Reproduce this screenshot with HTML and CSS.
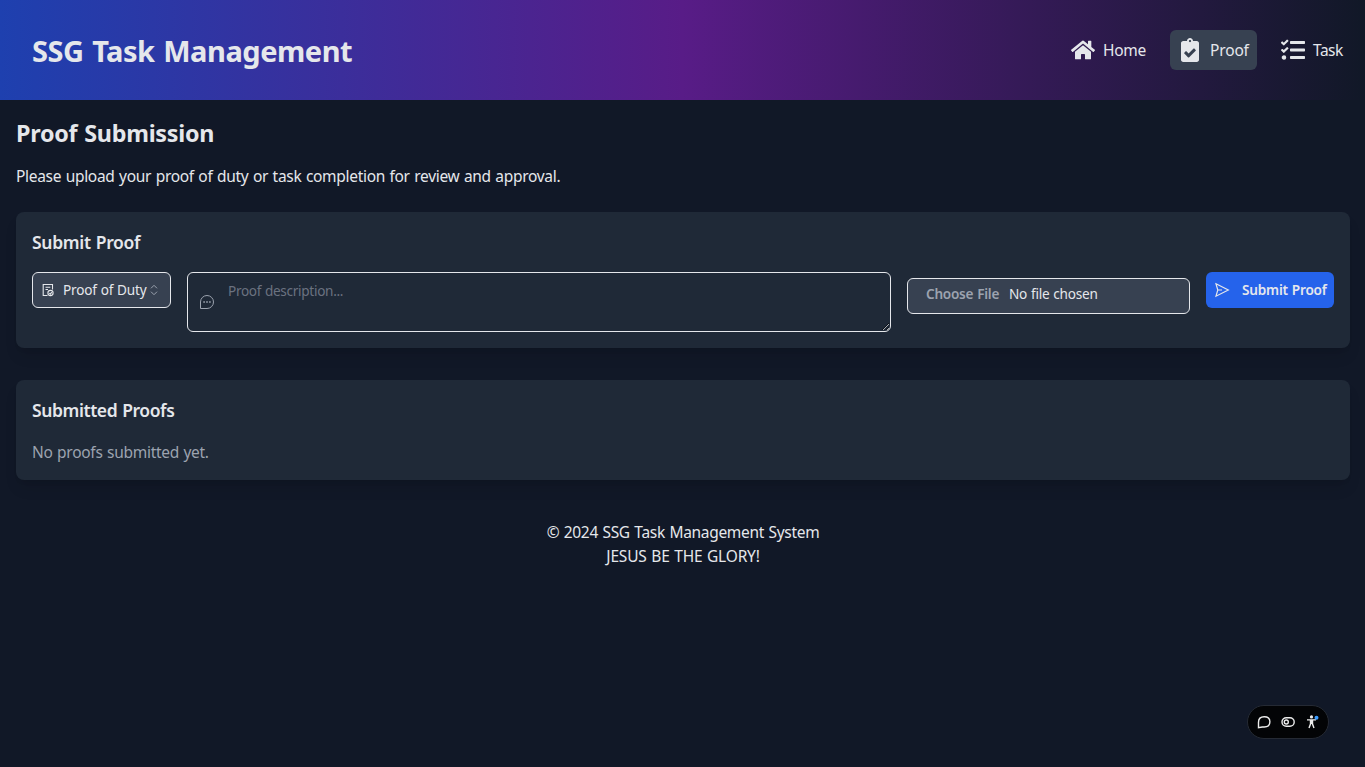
FILE: index.html
```html
<!DOCTYPE html>
<html lang="en">
<head>
<meta charset="utf-8">
<title>SSG Task Management</title>
<link rel="stylesheet" href="styles.css">
</head>
<body>
<header class="header">
  <h1 class="brand">SSG Task Management</h1>
  <nav class="nav">
    <a class="nav-link nav-home"><svg class="nav-icon" viewBox="0 0 576 512"><path d="M280.37 148.26L96 300.11V464a16 16 0 0 0 16 16l112.06-.29a16 16 0 0 0 15.92-16V368a16 16 0 0 1 16-16h64a16 16 0 0 1 16 16v95.64a16 16 0 0 0 16 16.05L464 480a16 16 0 0 0 16-16V300L295.67 148.26a12.19 12.19 0 0 0-15.3 0zM571.6 251.47L488 182.56V44.05a12 12 0 0 0-12-12h-56a12 12 0 0 0-12 12v72.61L318.47 43a48 48 0 0 0-61 0L4.34 251.47a12 12 0 0 0-1.6 16.9l25.5 31A12 12 0 0 0 45.15 301l235.22-193.74a12.19 12.19 0 0 1 15.3 0L530.9 301a12 12 0 0 0 16.9-1.6l25.5-31a12 12 0 0 0-1.7-16.93z"/></svg><span>Home</span></a>
    <a class="nav-link nav-proof active"><svg class="nav-icon" viewBox="0 0 384 512"><path d="M336 64h-80c0-35.3-28.7-64-64-64s-64 28.7-64 64H48C21.5 64 0 85.5 0 112v352c0 26.5 21.5 48 48 48h288c26.5 0 48-21.5 48-48V112c0-26.5-21.5-48-48-48zM192 40c13.3 0 24 10.7 24 24s-10.7 24-24 24-24-10.7-24-24 10.7-24 24-24zm121.2 231.8l-143 141.8c-4.7 4.7-12.3 4.6-17-.1l-82.6-83.3c-4.7-4.7-4.6-12.3.1-17L99.1 285c4.7-4.7 12.3-4.6 17 .1l46 46.4 106-105.2c4.7-4.7 12.3-4.6 17 .1l28.2 28.4c4.7 4.8 4.6 12.3-.1 17z"/></svg><span>Proof</span></a>
    <a class="nav-link nav-task"><svg class="nav-icon" viewBox="0 0 512 512"><path d="M139.61 35.5a12 12 0 0 0-17 0L58.93 98.81l-22.7-22.12a12 12 0 0 0-17 0L3.53 92.41a12 12 0 0 0 0 17l47.59 47.4a12.78 12.78 0 0 0 17.61 0l15.59-15.62L156.52 69a12.09 12.09 0 0 0 .09-17zm0 159.19a12 12 0 0 0-17 0l-63.68 63.72-22.7-22.1a12 12 0 0 0-17 0L3.53 252a12 12 0 0 0 0 17L51 316.5a12.77 12.77 0 0 0 17.6 0l15.7-15.69 72.2-72.22a12 12 0 0 0 .09-16.9zM64 368c-26.49 0-48.59 21.5-48.59 48S37.53 464 64 464a48 48 0 0 0 0-96zm432 16H208a16 16 0 0 0-16 16v32a16 16 0 0 0 16 16h288a16 16 0 0 0 16-16v-32a16 16 0 0 0-16-16zm0-320H208a16 16 0 0 0-16 16v32a16 16 0 0 0 16 16h288a16 16 0 0 0 16-16V80a16 16 0 0 0-16-16zm0 160H208a16 16 0 0 0-16 16v32a16 16 0 0 0 16 16h288a16 16 0 0 0 16-16v-32a16 16 0 0 0-16-16z"/></svg><span>Task</span></a>
  </nav>
</header>
<main class="main">
  <h2 class="page-title">Proof Submission</h2>
  <p class="intro">Please upload your proof of duty or task completion for review and approval.</p>
  <section class="card form-card">
    <h3 class="card-title title-submit">Submit Proof</h3>
    <form class="form">
      <button type="button" class="select">
        <svg class="select-icon" viewBox="0 0 14 14"><path d="M6.500 12.500H2.200V1.500h9.300v5M4.500 4.200h4.800M4.500 6.500h2.500"/><circle cx="9.500" cy="10" r="2.600"/><path d="M8.300 10.200l1 .9 1.500-2"/></svg>
        <span>Proof of Duty</span>
        <svg class="chevrons" viewBox="0 0 8 12"><path d="M1 4.300l3-3 3 3M1 7.700l3 3 3-3"/></svg>
      </button>
      <div class="description">
        <textarea class="textarea" placeholder="Proof description..."></textarea>
        <svg class="chat-icon" viewBox="0 0 16 16"><path d="M1.500 14.500V8A6.500 6.500 0 1 1 8 14.500z"/><path class="dots" d="M4.300 8h1.600M7.200 8h1.600M10.100 8h1.600"/></svg>
      </div>
      <label class="file"><span class="file-button">Choose File</span><span class="file-name">No file chosen</span></label>
      <button type="button" class="submit"><svg class="send-icon" viewBox="0 0 16 16"><path d="M2 1.800L14.300 8 2 14.200 3.800 8zM3.800 8H8"/></svg><span>Submit Proof</span></button>
    </form>
  </section>
  <section class="card list-card">
    <h3 class="card-title title-list">Submitted Proofs</h3>
    <p class="empty">No proofs submitted yet.</p>
  </section>
</main>
<footer class="footer">
  <p class="copyright">© 2024 SSG Task Management System</p>
  <p class="motto">JESUS BE THE GLORY!</p>
</footer>
<div class="toolbar">
  <svg class="tool-icon" viewBox="0 0 16 16"><path d="M2.500 13.700V8.200C2.500 4.800 4.800 2.700 8.200 2.700s5.700 2 5.700 5.100-2.300 5.200-5.700 5.200H6.300z"/></svg>
  <svg class="tool-icon" viewBox="0 0 16 16"><rect x="2" y="3.700" width="12.200" height="8.600" rx="4.300"/><circle cx="6.300" cy="8" r="2"/></svg>
  <svg class="tool-icon person" viewBox="0 0 16 16"><circle class="fill" cx="7.500" cy="2.900" r="1.600"/><path d="M3 5.900h9M7.500 6v4M6.500 6.500v3.500l-1.500 4M8.500 6.500v3.500l1.500 4"/><circle class="badge" cx="12.500" cy="3.700" r="2"/></svg>
</div>
</body>
</html>
```
FILE: styles.css
```css
* { box-sizing: border-box; }
body {
  margin: 0;
  min-height: 767px;
  background: #111827;
  color: #e5e7eb;
  font: 15.5px/24px "Noto Sans", sans-serif;
  word-spacing: .8px;
}
h1, h2, h3, p { margin: 0; white-space: nowrap; }
span { white-space: nowrap; }
button, textarea { font: inherit; color: inherit; word-spacing: inherit; margin: 0; }
svg { display: block; flex: none; fill: none; stroke: currentColor; }

.header {
  display: flex;
  align-items: center;
  justify-content: space-between;
  height: 100px;
  padding: 0 15px 0 32px;
  background: linear-gradient(to right, #1e40af, #581c87, #111827);
}
.brand {
  padding-top: 2px;
  font-size: 29px;
  line-height: 36px;
  font-weight: 700;
  letter-spacing: -.46px;
  word-spacing: 1.5px;
}
.nav { display: flex; gap: 16px; }
.nav-link {
  display: flex;
  align-items: center;
  gap: 8px;
  height: 40px;
  padding: 8px;
  border-radius: 6px;
}
.nav-home { width: 91px; letter-spacing: -.3px; }
.nav-proof { width: 87px; letter-spacing: -.15px; }
.nav-task { width: 77px; letter-spacing: -.5px; }
.nav-link.active { background: #374151; }
.nav-icon { width: 24px; height: 24px; fill: currentColor; stroke: none; }

.main { padding: 16px 15px 0 16px; }
.page-title {
  margin: 1px 0 15px;
  font-size: 23.3px;
  line-height: 32px;
  font-weight: 700;
  letter-spacing: -.24px;
  word-spacing: 1px;
}
.intro { letter-spacing: -.305px; }
.card {
  padding: 16px;
  border-radius: 8px;
  background: #1f2937;
  box-shadow: 0 10px 15px -3px rgba(0, 0, 0, .1), 0 4px 6px -4px rgba(0, 0, 0, .1);
}
.form-card { height: 136px; margin-top: 24px; }
.list-card { height: 100px; margin-top: 32px; }
.card-title { font-size: 17.5px; line-height: 28px; font-weight: 600; }
.title-submit { letter-spacing: -.32px; }
.title-list { letter-spacing: -.41px; }
.form {
  display: grid;
  grid-template-columns: 139px 704px 283px 128px;
  gap: 16px;
  align-items: start;
  margin-top: 16px;
  font-size: 13.6px;
  line-height: 20px;
  word-spacing: .6px;
}
.select {
  display: flex;
  align-items: center;
  height: 36px;
  padding: 0 12px 0 8px;
  border: 1px solid #e5e7eb;
  border-radius: 6px;
  background: #374151;
  letter-spacing: -.2px;
}
.select-icon { width: 14px; height: 14px; margin-right: 8px; stroke-width: 1.1; }
.chevrons { width: 8px; height: 12px; margin-left: auto; color: #9ca3af; }
.description { position: relative; }
.textarea {
  display: block;
  width: 100%;
  height: 60px;
  padding: 8px 40px;
  border: 1px solid #e5e7eb;
  border-radius: 6px;
  background: transparent;
  resize: vertical;
  letter-spacing: -.31px;
}
.textarea::placeholder { color: #6b7280; }
.chat-icon {
  position: absolute;
  left: 12px;
  top: 22px;
  width: 16px;
  height: 16px;
  color: #9ca3af;
}
.chat-icon .dots { stroke-width: 1.6; }
.file {
  display: flex;
  align-items: center;
  height: 36px;
  margin-top: 6px;
  padding: 0 18px 4px;
  border: 1px solid #e5e7eb;
  border-radius: 6px;
  background: #374151;
}
.file-button { width: 83px; color: #9ca3af; font-weight: 600; letter-spacing: -.25px; }
.file-name { letter-spacing: -.24px; }
.submit {
  display: flex;
  align-items: center;
  height: 36px;
  padding: 0 7px 0 8px;
  border: 0;
  border-radius: 6px;
  background: #2563eb;
  font-weight: 600;
  letter-spacing: -.2px;
}
.send-icon { width: 16px; height: 16px; margin-right: 12px; stroke-width: 1.2; }
.empty { margin-top: 16px; color: #9ca3af; letter-spacing: -.29px; }
.footer { padding: 40px 0 0 1px; text-align: center; }
.copyright { letter-spacing: -.31px; }
.motto { letter-spacing: -.19px; }

.toolbar {
  position: fixed;
  right: 36px;
  bottom: 28px;
  display: flex;
  align-items: center;
  justify-content: center;
  gap: 8px;
  width: 82px;
  height: 34px;
  border: 1px solid #252a34;
  border-radius: 17px;
  background: #030406;
  color: #ededed;
}
.tool-icon { width: 16px; height: 16px; stroke-width: 1.4; }
.tool-icon .fill { fill: currentColor; stroke: none; }
.tool-icon .badge { fill: #3b9cff; stroke: none; }
```
